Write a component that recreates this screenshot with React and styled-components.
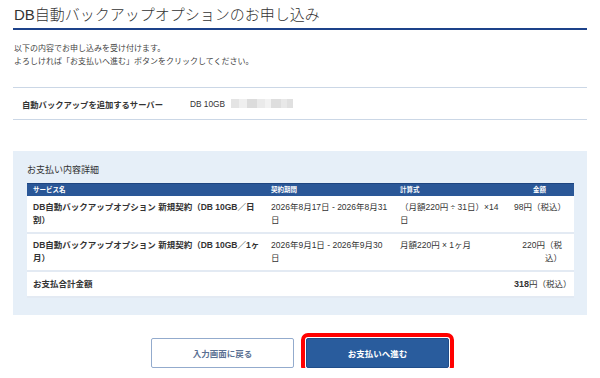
import React from 'react'
import styled, { createGlobalStyle } from 'styled-components'

const GlobalStyle = createGlobalStyle`
    body {
        margin: 0;
        background: #fff;
        font-family: "Liberation Sans", "Noto Sans CJK JP", sans-serif;
        color: #333;
    }
`

const Page = styled.div`
    width: 574px;
    padding: 0 13px;
`

const Title = styled.h1`
    margin: 0;
    padding: 6px 0 4px 1px;
    font-size: 15px;
    font-weight: 300;
    line-height: 18px;
    color: #333;
    border-bottom: 2px solid #1d428a;
`

const Intro = styled.p`
    margin: 12px 0 0 1px;
    font-size: 8px;
    line-height: 13px;
    color: #444;
`

const InfoRow = styled.div`
    margin-top: 19px;
    display: flex;
    align-items: center;
    height: 31px;
    padding: 0 9px;
    border-top: 1px solid #cbd7e6;
    border-bottom: 1px solid #cbd7e6;
    font-size: 8.3px;
`

const InfoLabel = styled.span`
    width: 168px;
    font-weight: bold;
`

const InfoValue = styled.span`
    display: flex;
    align-items: center;
    gap: 6px;
`

const Blur = styled.span`
    display: flex;
    height: 9px;
`

const BlurCell = styled.span`
    width: ${p => p.w}px;
    background: ${p => p.c};
`

const Panel = styled.section`
    margin-top: 31px;
    background: #e6eff8;
    padding: 13px 13px 17px 14px;
`

const PanelTitle = styled.h2`
    margin: 0 0 6px;
    font-size: 9px;
    line-height: 13px;
    font-weight: normal;
    color: #333;
`

const Table = styled.table`
    width: 100%;
    border-collapse: collapse;
    table-layout: fixed;
    background: #fff;
    font-size: 8.5px;
`

const Th = styled.th`
    background: #2a5797;
    color: #fff;
    font-size: 6.5px;
    font-weight: bold;
    height: 12px;
    padding: 0 6px;
    line-height: 12px;
    text-align: ${p => p.align || 'left'};
    border-top: 1px solid #1e4580;
`

const Td = styled.td`
    padding: ${p => (p.total ? '6px' : '5px')} ${p => (p.right ? '12px' : '4px')} 5px ${p => (p.right ? '9px' : '6px')};
    line-height: 13px;
    vertical-align: top;
    text-align: ${p => (p.right ? 'right' : 'left')};
    font-weight: ${p => (p.bold ? 'bold' : 'normal')};
    white-space: ${p => (p.total ? 'nowrap' : 'normal')};
    color: #333;
    border-bottom: 2px solid #e3eaf3;
`

const Big = styled.b`
    font-size: 9px;
`

const Actions = styled.div`
    display: flex;
    justify-content: center;
    gap: 12px;
    margin-top: 23px;
`

const Button = styled.button`
    width: 143px;
    height: 30px;
    border-radius: 2px;
    font-family: inherit;
    font-size: 8.5px;
    font-weight: bold;
    cursor: pointer;
    background: ${p => (p.primary ? '#295c9d' : '#fff')};
    color: ${p => (p.primary ? '#fff' : '#5b7193')};
    border: ${p => (p.primary ? '1px solid #1f4d8a' : '1.5px solid #93abcd')};
    outline: ${p => (p.highlight ? '4px solid #ff0000' : 'none')};
    outline-offset: 1px;
`

const rows = [
    {
        name: 'DB自動バックアップオプション 新規契約（DB 10GB／日割）',
        period: '2026年8月17日 - 2026年8月31日',
        calc: '（月額220円 ÷ 31日）×14日',
        price: '98円（税込）',
    },
    {
        name: 'DB自動バックアップオプション 新規契約（DB 10GB／1ヶ月）',
        period: '2026年9月1日 - 2026年9月30日',
        calc: '月額220円 × 1ヶ月',
        price: '220円（税込）',
    },
]

const blur = [
    [8, '#e4e4e4'], [8, '#efefef'], [10, '#dcdcdc'], [8, '#eaeaea'],
    [6, '#f2f2f2'], [10, '#dedede'], [6, '#e8e8e8'], [6, '#e0e0e0'],
]

export default function App() {
    return (
        <Page>
            <GlobalStyle />
            <Title>DB自動バックアップオプションのお申し込み</Title>

            <Intro>
                以下の内容でお申し込みを受け付けます。<br />
                よろしければ「お支払いへ進む」ボタンをクリックしてください。
            </Intro>

            <InfoRow>
                <InfoLabel>自動バックアップを追加するサーバー</InfoLabel>
                <InfoValue>
                    DB 10GB
                    <Blur>
                        {blur.map(([w, c], i) => <BlurCell key={i} w={w} c={c} />)}
                    </Blur>
                </InfoValue>
            </InfoRow>

            <Panel>
                <PanelTitle>お支払い内容詳細</PanelTitle>
                <Table>
                    <colgroup>
                        <col style={{ width: 238 }} />
                        <col style={{ width: 129 }} />
                        <col style={{ width: 111 }} />
                        <col />
                    </colgroup>
                    <thead>
                        <tr>
                            <Th>サービス名</Th>
                            <Th>契約期間</Th>
                            <Th>計算式</Th>
                            <Th align="center">金額</Th>
                        </tr>
                    </thead>
                    <tbody>
                        {rows.map(r => (
                            <tr key={r.name}>
                                <Td bold>{r.name}</Td>
                                <Td>{r.period}</Td>
                                <Td>{r.calc}</Td>
                                <Td right>{r.price}</Td>
                            </tr>
                        ))}
                        <tr>
                            <Td bold total>お支払合計金額</Td>
                            <Td total />
                            <Td total />
                            <Td right total>
                                <Big>318</Big>円（税込）
                            </Td>
                        </tr>
                    </tbody>
                </Table>
            </Panel>

            <Actions>
                <Button>入力画面に戻る</Button>
                <Button primary highlight>お支払いへ進む</Button>
            </Actions>
        </Page>
    )
}
